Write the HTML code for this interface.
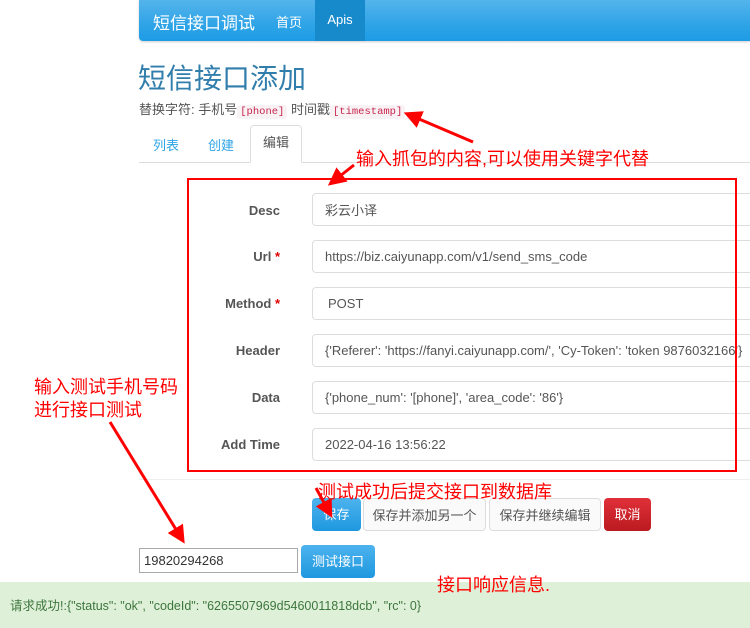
<!DOCTYPE html>
<html><head><meta charset="utf-8"><style>
*{box-sizing:border-box;margin:0;padding:0}
body{width:750px;height:628px;overflow:hidden;background:#fff;font-family:"Liberation Sans","Noto Sans CJK SC",sans-serif;font-size:13px;color:#555;position:relative}
.a{position:absolute}
.nav{left:139px;top:0;width:611px;height:41px;background:linear-gradient(#54b4eb,#2fa4e7 60%,#1d9ce5);border-radius:0 0 0 4px;box-shadow:0 1px 2px rgba(0,0,0,.2)}
.lbl{font-weight:bold;color:#555;text-align:right;width:140px;left:140px;font-size:13px}
.inp{left:312px;width:450px;height:33px;border:1px solid #ddd;border-radius:4px;padding:0 12px;line-height:31px;color:#555;font-size:13px}
.st{color:#d00}
.btn{top:498px;height:33px;border-radius:4px;line-height:33px;text-align:center;font-size:13px}
.ann{color:#f00;font-size:18px}
code{font-family:"Liberation Mono",monospace;font-size:10.5px;color:#c7254e;background:#f9f2f4;padding:1px 3px;border-radius:3px}
</style></head><body>
<div class="a nav"></div>
<div class="a" style="left:153px;top:9px;font-size:17px;color:#fff">短信接口调试</div>
<div class="a" style="left:276px;top:12px;font-size:13px;color:#fff">首页</div>
<div class="a" style="left:315px;top:0;width:50px;height:41px;background:#178acc;color:#fff;text-align:center;line-height:40px;font-size:13px">Apis</div>
<div class="a" style="left:138px;top:57px;font-size:28px;color:#317eac">短信接口添加</div>
<div class="a" style="left:139px;top:99px;font-size:13px;color:#555">替换字符: 手机号<code>[phone]</code> 时间戳<code>[timestamp]</code></div>
<div class="a" style="left:139px;top:162px;width:611px;border-top:1px solid #ddd"></div>
<div class="a" style="left:153px;top:135px;color:#2fa4e7">列表</div>
<div class="a" style="left:208px;top:135px;color:#2fa4e7">创建</div>
<div class="a" style="left:250px;top:125px;width:52px;height:38px;border:1px solid #ddd;border-bottom:1px solid #fff;border-radius:4px 4px 0 0;background:#fff;text-align:center;line-height:34px;color:#555">编辑</div>
<div class="a lbl" style="top:203px">Desc</div>
<div class="a inp" style="top:193px;font-family:'Noto Sans CJK SC',sans-serif">彩云小译</div>
<div class="a lbl" style="top:249px">Url <span class="st">*</span></div>
<div class="a inp" style="top:240px">https://biz.caiyunapp.com/v1/send_sms_code</div>
<div class="a lbl" style="top:296px">Method <span class="st">*</span></div>
<div class="a inp" style="top:287px;padding-left:15px">POST</div>
<div class="a lbl" style="top:343px">Header</div>
<div class="a inp" style="top:334px">{'Referer': 'https://fanyi.caiyunapp.com/', 'Cy-Token': 'token 9876032166'}</div>
<div class="a lbl" style="top:390px">Data</div>
<div class="a inp" style="top:381px">{'phone_num': '[phone]', 'area_code': '86'}</div>
<div class="a lbl" style="top:437px">Add Time</div>
<div class="a inp" style="top:428px">2022-04-16 13:56:22</div>
<div class="a" style="left:187px;top:178px;width:550px;height:294px;border:2px solid #f00"></div>
<div class="a" style="left:139px;top:479px;width:611px;border-top:1px solid #eee"></div>
<div class="a btn" style="left:312px;width:49px;background:linear-gradient(#4db3ee,#1e98df);color:#fff">保存</div>
<div class="a btn" style="left:363px;width:123px;border:1px solid #ddd;background:#fafafa;color:#555">保存并添加另一个</div>
<div class="a btn" style="left:489px;width:112px;border:1px solid #ddd;background:#fafafa;color:#555">保存并继续编辑</div>
<div class="a btn" style="left:604px;width:47px;background:linear-gradient(#e0303a,#bb1a20);color:#fff">取消</div>
<div class="a" style="left:139px;top:548px;width:159px;height:25px;border:1px solid #aaa;padding-left:4px;line-height:23px;color:#333;font-size:13px">19820294268</div>
<div class="a" style="left:301px;top:545px;width:74px;height:33px;border-radius:4px;background:linear-gradient(#4db3ee,#1e98df);color:#fff;text-align:center;line-height:33px">测试接口</div>
<div class="a" style="left:0;top:582px;width:750px;height:46px;background:#dff0d8"></div>
<div class="a" style="left:10px;top:595px;color:#3c763d;font-size:12.5px">请求成功!:{"status": "ok", "codeId": "6265507969d5460011818dcb", "rc": 0}</div>
<div class="a ann" style="left:356px;top:145px">输入抓包的内容,可以使用关键字代替</div>
<div class="a ann" style="left:34px;top:376px;line-height:23px">输入测试手机号码<br>进行接口测试</div>
<div class="a ann" style="left:318px;top:478px">测试成功后提交接口到数据库</div>
<div class="a ann" style="left:437px;top:571px">接口响应信息.</div>
<svg class="a" style="left:0;top:0" width="750" height="628">
<defs><marker id="m" markerWidth="6" markerHeight="6" refX="3" refY="3" orient="auto"><path d="M0,0L6,3L0,6z" fill="#f00"/></marker></defs>
<g stroke="#f00" stroke-width="3" marker-end="url(#m)">
<line x1="473" y1="142" x2="412" y2="116"/>
<line x1="354" y1="165" x2="335" y2="180"/>
<line x1="110" y1="422" x2="180" y2="536"/>
<line x1="316" y1="488" x2="328" y2="510"/>
</g></svg>
</body></html>
